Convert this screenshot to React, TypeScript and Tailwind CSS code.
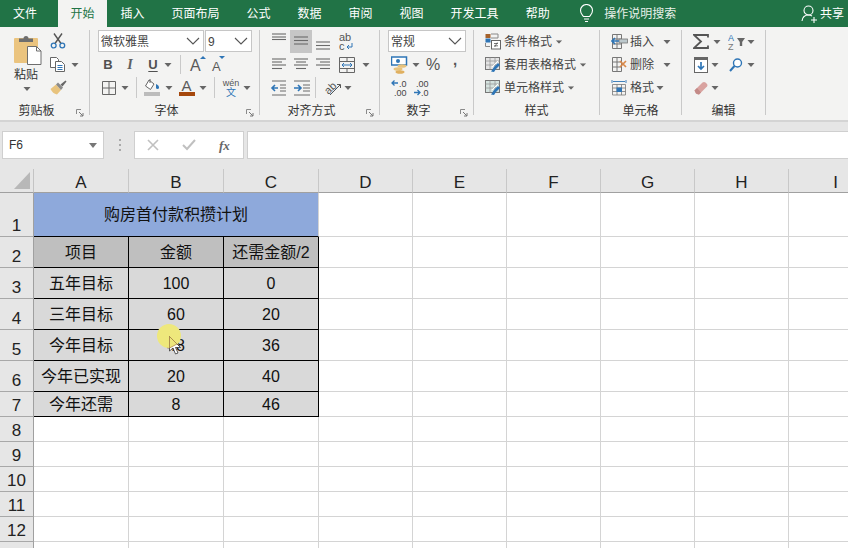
import React from "react";

const G = "#6a6a6a";
const B = "#2e75b6";

function Chev({ className = "" }: { className?: string }) {
  return (
    <svg width="8" height="4" viewBox="0 0 8 4" className={`shrink-0 ${className}`}>
      <path d="M0.5 0H7.5L4 4Z" fill="#666" />
    </svg>
  );
}
function BigChev() {
  return (
    <svg width="14" height="8" viewBox="0 0 14 8" className="shrink-0">
      <path d="M1 1L7 7L13 1" fill="none" stroke="#555" strokeWidth="1.1" />
    </svg>
  );
}
function Launcher() {
  return (
    <svg width="8" height="8" viewBox="0 0 8 8" className="shrink-0">
      <path d="M0.5 5V0.5H5" fill="none" stroke="#8a8a8a" />
      <path d="M3 3L7 7M7 4V7H4" fill="none" stroke="#777" />
    </svg>
  );
}
function Sep({ className = "h-[85px]" }: { className?: string }) {
  return <div className={`w-px shrink-0 bg-[#c9c9c9] ${className}`} />;
}
function Row({ children, className = "" }: { children?: React.ReactNode; className?: string }) {
  return <div className={`flex h-[23px] items-center ${className}`}>{children}</div>;
}
function Label({ text, launcher }: { text: string; launcher?: boolean }) {
  return (
    <div className="mt-[3px] flex h-[17px] items-center text-[12px] leading-none text-[#333]">
      <div className="flex-1 text-center">{text}</div>
      {launcher && (
        <div className="flex w-[16px] justify-start pt-[5px] pl-[3px]">
          <Launcher />
        </div>
      )}
    </div>
  );
}
function Lines({ ys, xs }: { ys: number[]; xs: [number, number][] }) {
  return (
    <svg width="22" height="23" viewBox="0 0 22 23" className="shrink-0">
      {ys.map((y, i) => (
        <line key={i} x1={xs[i][0]} x2={xs[i][1]} y1={y} y2={y} stroke={G} strokeWidth="1.1" />
      ))}
    </svg>
  );
}
function MiniGrid({ fill, children }: { fill?: string; children?: React.ReactNode }) {
  return (
    <svg width="17" height="17" viewBox="0 0 17 17" className="shrink-0">
      <path d="M1.5 1.5H10.5V15.5H1.5ZM6 1.5V15.5M1.5 6H10.5M1.5 11H10.5" fill="none" stroke="#777" strokeWidth="1" />
      {fill && <rect x="2" y="6" width="8" height="5" fill={fill} />}
      {children}
    </svg>
  );
}
function StyleIcon({ tint }: { tint: string }) {
  return (
    <svg width="16" height="17" viewBox="0 0 16 17" className="shrink-0">
      <rect x="0.5" y="1.5" width="14" height="12" fill={tint} stroke="#777" />
      <path d="M0.5 5H14.5M0.5 9H14.5M5 1.5V13.5M10 1.5V13.5" stroke="#999" strokeWidth="0.8" />
      <path d="M6 15.5L9 11L13 7L15 9L11 13L9 16Z" fill={B} />
      <path d="M7 11L13 5" stroke="#fff" strokeWidth="1" />
    </svg>
  );
}
function StyleRow({ icon, text }: { icon: React.ReactNode; text: string }) {
  return (
    <Row className="pl-[11px]">
      {icon}
      <span className="ml-[3px] text-[12px] text-[#444]">{text}</span>
      <Chev className="ml-[3px] scale-90" />
    </Row>
  );
}
function CellRow({ icon, text, chevGap }: { icon: React.ReactNode; text: string; chevGap: string }) {
  return (
    <Row className="pl-[11px]">
      {icon}
      <span className="ml-[2px] text-[12px] text-[#444]">{text}</span>
      <Chev className={chevGap} />
    </Row>
  );
}

const tabs = ["插入", "页面布局", "公式", "数据", "审阅", "视图", "开发工具", "帮助"];

function TabBar() {
  return (
    <div className="flex h-[27px] items-center bg-[#217346] text-[12px] text-white">
      <div className="px-[13px]">文件</div>
      <div className="ml-[8px] flex h-full w-[49px] shrink-0 items-center justify-center bg-[#f3f3f2] text-[#217346]">开始</div>
      {tabs.map((t) => (
        <div key={t} className="shrink-0 px-[13.5px]">{t}</div>
      ))}
      <svg width="15" height="19" viewBox="0 0 15 19" className="ml-[16px] shrink-0">
        <path d="M4.5 12.5C3 10.5 1.5 9.5 1.5 6.5A6 6 0 0 1 13.5 6.5C13.5 9.5 12 10.5 10.5 12.5ZM5 15H10M6 17.5H9" fill="none" stroke="#fff" strokeWidth="1.1" />
      </svg>
      <div className="ml-[10px] text-[#e8f0ea]">操作说明搜索</div>
      <div className="ml-auto flex items-center pr-[4px]">
        <svg width="17" height="18" viewBox="0 0 17 18" className="shrink-0">
          <circle cx="7.5" cy="5.5" r="4.5" fill="none" stroke="#fff" strokeWidth="1.1" />
          <path d="M1 16C1.5 12 4 10 7.5 10C9 10 10 10.4 11 11M10 15H16M13 12V18" fill="none" stroke="#fff" strokeWidth="1.1" />
        </svg>
        <span className="ml-[2px]">共享</span>
      </div>
    </div>
  );
}

function Clipboard() {
  return (
    <div className="w-[89px] shrink-0">
      <div className="flex h-[69px]">
        <div className="ml-[13px] flex w-[29px] flex-col items-start">
          <svg width="29" height="31" viewBox="0 0 29 31" className="mt-[4px] shrink-0">
            <rect x="1" y="4" width="24" height="25" rx="1" fill="#ebc47f" />
            <path d="M6 8V4.5H10.5A2.5 2.5 0 0 1 15.5 4.5H20V8Z" fill="#6e6e6e" />
            <path d="M14.5 12.5H23.5L28 17V30.5H14.5Z" fill="#fff" stroke="#6e6e6e" />
            <path d="M23.5 12.5V17H28" fill="none" stroke="#6e6e6e" />
          </svg>
          <div className="mt-[3px] pl-px text-[12px] leading-[14px] text-[#333]">粘贴</div>
          <Chev className="mt-[5px] ml-[10px]" />
        </div>
        <div className="ml-[8px] flex flex-col">
          <svg width="16" height="16" viewBox="0 0 16 16" className="mt-[3px] shrink-0">
            <path d="M4 0.5L11 10.5M12 0.5L5 10.5" stroke="#555" strokeWidth="1.4" fill="none" />
            <circle cx="3.7" cy="12.5" r="2.4" fill="none" stroke={B} strokeWidth="1.3" />
            <circle cx="12.3" cy="12.5" r="2.4" fill="none" stroke={B} strokeWidth="1.3" />
          </svg>
          <div className="mt-[8px] flex items-center">
            <svg width="16" height="15" viewBox="0 0 16 15" className="shrink-0">
              <path d="M0.5 0.5H6.5L8.5 2.5V10.5H0.5Z" fill="#fff" stroke="#666" />
              <path d="M5.5 4.5H11.5L14.5 7.5V14.5H5.5Z" fill="#fff" stroke="#666" />
              <path d="M7.5 8.5H12.5M7.5 10.5H12.5M7.5 12.5H12.5" stroke={B} />
            </svg>
            <Chev className="ml-[5px]" />
          </div>
          <svg width="17" height="15" viewBox="0 0 17 15" className="mt-[8px] shrink-0">
            <path d="M0.5 9L6 4.5L11 10L7 14.5C4 14 2 12 0.5 9Z" fill="#e8c37d" />
            <path d="M6 4.5L8 2.5L13 7.5L11 10Z" fill="#8a8a8a" />
            <path d="M10.5 4.5L15.5 0.5L16.5 1.5L12.5 6.5Z" fill="#666" />
          </svg>
        </div>
      </div>
      <Label text="剪贴板" launcher />
    </div>
  );
}

function Box({ className, text }: { className: string; text: string }) {
  return (
    <div className={`flex h-[22px] items-center justify-between border border-[#c6c6c6] bg-white pl-[2px] pr-[3px] text-[12px] text-[#444] ${className}`}>
      <span className="pt-px">{text}</span>
      <BigChev />
    </div>
  );
}

function Font() {
  return (
    <div className="w-[169px] shrink-0">
      <div className="flex h-[23px] pl-[8px]">
        <Box className="w-[106px]" text="微软雅黑" />
        <Box className="ml-px w-[47px]" text="9" />
      </div>
      <Row>
        <div className="ml-[8px] w-[20px] text-center font-bold text-[13px] leading-none text-[#505050]">B</div>
        <div className="w-[24px] text-center font-['Liberation_Serif',serif] font-bold italic text-[14px] leading-none text-[#606060]">I</div>
        <div className="w-[22px] text-center font-bold text-[13px] leading-none text-[#505050] underline underline-offset-2">U</div>
        <div className="w-[8px]"><Chev /></div>
        <Sep className="ml-[8px] h-[19px]" />
        <svg width="30" height="23" viewBox="0 0 30 23" className="shrink-0">
          <text x="9" y="18" fontSize="16" fill="#5a5a5a" fontFamily="Liberation Sans">A</text>
          <path d="M19 6L22 3L25 6Z" fill={B} />
        </svg>
        <svg width="16" height="23" viewBox="0 0 16 23" className="shrink-0">
          <text x="1" y="18" fontSize="13" fill="#5a5a5a" fontFamily="Liberation Sans">A</text>
          <path d="M8 3H14L11 6Z" fill={B} />
        </svg>
      </Row>
      <Row>
        <svg width="14" height="14" viewBox="0 0 14 14" className="ml-[12px] shrink-0">
          <path d="M0.5 0.5H13.5V13.5H0.5ZM7 0.5V13.5M0.5 7H13.5" fill="none" stroke="#666" />
        </svg>
        <Chev className="ml-[5px]" />
        <Sep className="ml-[7px] h-[21px]" />
        <svg width="17" height="19" viewBox="0 0 17 19" className="ml-[7px] shrink-0">
          <path d="M5 2L10 6L6.5 11.5L1.5 8Z" fill="#fff" stroke="#666" />
          <path d="M6 1V5" stroke="#666" />
          <path d="M12 6C14 7 15 8 15 9.5A1.5 1.5 0 0 1 12 9.5Z" fill={B} />
          <rect x="0" y="14" width="16" height="4" fill="#bcbcbc" />
        </svg>
        <Chev className="ml-[4px]" />
        <svg width="16" height="19" viewBox="0 0 16 19" className="ml-[6px] shrink-0">
          <text x="2.5" y="13" fontSize="15" fill="#5a5a5a" fontFamily="Liberation Sans">A</text>
          <rect x="0" y="14" width="16" height="4" fill="#a5470c" />
        </svg>
        <Chev className="ml-[4px]" />
        <Sep className="ml-[7px] h-[21px]" />
        <div className="ml-[7px] flex w-[18px] shrink-0 flex-col items-center">
          <span className="text-[9px] leading-[10px] text-[#555]">wén</span>
          <span className="text-[10px] leading-[10px] text-[#2e75b6]">文</span>
        </div>
        <Chev className="ml-[3px]" />
      </Row>
      <Label text="字体" launcher />
    </div>
  );
}

function Align() {
  const a = [[4, 18], [4, 18], [4, 18]] as [number, number][];
  const left = [[4, 18], [4, 14], [4, 18], [4, 14]] as [number, number][];
  const mid = [[4, 18], [6, 16], [4, 18], [6, 16]] as [number, number][];
  const right = [[4, 18], [8, 18], [4, 18], [8, 18]] as [number, number][];
  const ys = [6, 9, 12, 15.5];
  return (
    <div className="w-[119px] shrink-0">
      <Row className="pl-[8px]">
        <Lines ys={[4, 7, 9.5]} xs={a} />
        <div className="bg-[#c6c6c6]"><Lines ys={[7, 10.5, 14]} xs={a} /></div>
        <Lines ys={[12, 15.5, 19]} xs={a} />
        <div className="ml-[5px] flex flex-col text-[11px] leading-[9px] text-[#555]">
          <span className="block h-[9px]">ab</span>
          <span className="flex h-[9px] items-center">
            c
            <svg width="7" height="7" viewBox="0 0 7 7" className="ml-[1px] shrink-0">
              <path d="M6 0V4H1M3 2L1 4L3 6" fill="none" stroke={B} />
            </svg>
          </span>
        </div>
      </Row>
      <Row className="pl-[8px]">
        <Lines ys={ys} xs={left} />
        <Lines ys={ys} xs={mid} />
        <Lines ys={ys} xs={right} />
        <svg width="16" height="16" viewBox="0 0 16 16" className="ml-[5px] shrink-0">
          <path d="M0.5 0.5H15.5V15.5H0.5ZM0.5 4.5H15.5M0.5 11.5H15.5M8 0.5V4.5M8 11.5V15.5" fill="none" stroke="#666" />
          <path d="M3 8H13M5 6L3 8L5 10M11 6L13 8L11 10" fill="none" stroke={B} />
        </svg>
        <Chev className="ml-[7px]" />
      </Row>
      <Row className="pl-[8px]">
        <svg width="22" height="18" viewBox="0 0 22 18" className="shrink-0">
          <path d="M4 2H18M12 6H18M12 9H18M12 12H18M4 16H18" stroke={G} />
          <path d="M10 9H4M7 6L4 9L7 12" fill="none" stroke={B} strokeWidth="1.6" />
        </svg>
        <svg width="22" height="18" viewBox="0 0 22 18" className="shrink-0">
          <path d="M4 2H20M13 6H20M13 9H20M13 12H20M4 16H20" stroke={G} />
          <path d="M4 9H11M8 6L11 9L8 12" fill="none" stroke={B} strokeWidth="1.6" />
        </svg>
        <Sep className="ml-[3px] h-[21px]" />
        <svg width="19" height="19" viewBox="0 0 19 19" className="ml-[7px] shrink-0">
          <text x="1" y="14" fontSize="11" fill="#555" fontFamily="Liberation Sans" transform="rotate(-45 7 10)">ab</text>
          <path d="M7 17L17 7M14 6.5H17.5V10" fill="none" stroke="#555" />
        </svg>
        <Chev className="ml-[2px]" />
      </Row>
      <Label text="对齐方式" launcher />
    </div>
  );
}

function NumberGroup() {
  return (
    <div className="w-[93px] shrink-0">
      <div className="flex h-[23px] pl-[8px]">
        <Box className="w-[78px]" text="常规" />
      </div>
      <Row className="pl-[11px]">
        <svg width="17" height="18" viewBox="0 0 17 18" className="shrink-0">
          <rect x="0.5" y="1" width="15" height="8" fill="#fff" stroke={B} strokeWidth="1.5" />
          <circle cx="7" cy="5" r="2" fill={B} />
          <ellipse cx="11" cy="10" rx="4.5" ry="1.8" fill="#e8c37d" />
          <ellipse cx="7" cy="13" rx="4.5" ry="1.8" fill="#e8c37d" />
          <ellipse cx="9" cy="16" rx="4.5" ry="1.8" fill="#e0b060" />
        </svg>
        <Chev className="ml-[4px]" />
        <span className="ml-[3px] w-[20px] text-center text-[16px] leading-none text-[#555]">%</span>
        <span className="ml-[2px] w-[20px] -translate-y-[5px] text-center font-bold text-[15px] leading-none text-[#555]">,</span>
      </Row>
      <Row className="pl-[11px]">
        <svg width="16" height="18" viewBox="0 0 16 18" className="shrink-0">
          <path d="M7 4H1M3.5 1.5L1 4L3.5 6.5" fill="none" stroke={B} strokeWidth="1.3" />
          <text x="8" y="8" fontSize="9" fill="#444" fontFamily="Liberation Sans">.0</text>
          <text x="3" y="17" fontSize="9" fill="#444" fontFamily="Liberation Sans">.00</text>
        </svg>
        <svg width="16" height="18" viewBox="0 0 16 18" className="ml-[6px] shrink-0">
          <text x="3" y="8" fontSize="9" fill="#444" fontFamily="Liberation Sans">.00</text>
          <path d="M1 13.5H7M4.5 11L7 13.5L4.5 16" fill="none" stroke={B} strokeWidth="1.3" />
          <text x="8" y="17" fontSize="9" fill="#444" fontFamily="Liberation Sans">.0</text>
        </svg>
      </Row>
      <Label text="数字" launcher />
    </div>
  );
}

function Styles() {
  return (
    <div className="w-[125px] shrink-0">
      <StyleRow
        text="条件格式"
        icon={
          <svg width="16" height="17" viewBox="0 0 16 17" className="shrink-0">
            <rect x="0.5" y="1" width="5" height="4" fill="#a5622c" />
            <rect x="0.5" y="5.5" width="5" height="4" fill={B} />
            <path d="M6 1H13V5M6 5H13M0.5 10V13.5H5" fill="none" stroke="#888" />
            <rect x="6.5" y="7.5" width="9" height="8.5" fill="#fff" stroke="#666" />
            <path d="M9 10.5H13M9 12.8H13M12.3 9.5L9.7 14" stroke="#555" strokeWidth="0.8" />
          </svg>
        }
      />
      <StyleRow text="套用表格格式" icon={<StyleIcon tint="#e3e3e3" />} />
      <StyleRow text="单元格样式" icon={<StyleIcon tint="#d5e3df" />} />
      <Label text="样式" />
    </div>
  );
}

function Cells() {
  return (
    <div className="w-[81px] shrink-0">
      <CellRow
        text="插入"
        chevGap="ml-[9px]"
        icon={
          <MiniGrid>
            <rect x="8" y="6" width="8.5" height="4" fill="#bcc8cc" stroke="#777" strokeWidth="0.8" />
            <path d="M8 8H1M4 5L1 8L4 11" fill="none" stroke={B} strokeWidth="1.6" />
          </MiniGrid>
        }
      />
      <CellRow
        text="删除"
        chevGap="ml-[9px]"
        icon={
          <MiniGrid>
            <path d="M9 5L15 11M15 5L9 11" stroke="#d9894a" strokeWidth="1.7" />
          </MiniGrid>
        }
      />
      <CellRow
        text="格式"
        chevGap="ml-[2px]"
        icon={
          <svg width="17" height="17" viewBox="0 0 17 17" className="shrink-0">
            <path d="M1 1V4M15 1V4M2 2.5H14" stroke={B} strokeWidth="0.9" />
            <path d="M1.5 5.5H14.5V16H1.5ZM6 5.5V16M10.5 5.5V16M1.5 9H14.5M1.5 12.5H14.5" fill="none" stroke="#777" strokeWidth="0.8" />
            <rect x="5.5" y="8.5" width="5.5" height="4.5" fill={B} />
          </svg>
        }
      />
      <Label text="单元格" />
    </div>
  );
}

function Editing() {
  return (
    <div className="w-[83px] shrink-0">
      <Row className="pl-[11px]">
        <svg width="16" height="15" viewBox="0 0 16 15" className="shrink-0">
          <path d="M15 3.5V1H1L8 7.5L1 14H15V11.5" fill="none" stroke="#555" strokeWidth="1.8" />
        </svg>
        <Chev className="ml-[4px]" />
        <svg width="18" height="18" viewBox="0 0 18 18" className="ml-[7px] shrink-0">
          <text x="0" y="8" fontSize="9" fill={B} fontFamily="Liberation Sans">A</text>
          <text x="0" y="17" fontSize="9" fill="#777" fontFamily="Liberation Sans">Z</text>
          <path d="M9 5H17L14.2 9V13H11.8V9Z" fill="#666" />
        </svg>
        <Chev className="ml-[1px]" />
      </Row>
      <Row className="pl-[12px]">
        <svg width="14" height="16" viewBox="0 0 14 16" className="shrink-0">
          <rect x="0.5" y="0.5" width="13" height="15" fill="#fff" stroke="#666" />
          <rect x="0.5" y="0.5" width="13" height="2.5" fill="#666" />
          <path d="M7 5V12M4 9L7 12L10 9" fill="none" stroke={B} strokeWidth="1.7" />
        </svg>
        <Chev className="ml-[3px]" />
        <svg width="14" height="14" viewBox="0 0 14 14" className="ml-[10px] shrink-0">
          <circle cx="8.5" cy="5" r="4" fill="#fff" stroke={B} strokeWidth="1.4" />
          <path d="M5.5 8L1 13" stroke={B} strokeWidth="2" />
        </svg>
        <Chev className="ml-[4px]" />
      </Row>
      <Row className="pl-[12px]">
        <svg width="14" height="14" viewBox="0 0 14 14" className="shrink-0">
          <path d="M0.5 9.5L8.5 1.5C9.5 0.7 10.5 0.7 11.5 1.5L13 3C13.7 4 13.5 5 13 5.5L5 13.5C4 13.5 3 13.3 2 12.5Z" fill="#d9a3a0" />
          <path d="M0.5 9.5L2 12.5L5 13.5L7 11.5L3 7Z" fill="#c38a87" />
        </svg>
        <Chev className="ml-[3px]" />
      </Row>
      <Label text="编辑" />
    </div>
  );
}

function Ribbon() {
  return (
    <div className="flex h-[95px] items-start border-b-2 border-[#d4d4d4] bg-[#f3f3f2] pt-[3px]">
      <Clipboard />
      <Sep />
      <Font />
      <Sep />
      <Align />
      <Sep />
      <NumberGroup />
      <Sep />
      <Styles />
      <Sep />
      <Cells />
      <Sep />
      <Editing />
      <Sep />
    </div>
  );
}

function FormulaBar() {
  return (
    <div className="flex h-[47px] items-start bg-[#e6e6e6] pt-[9px]">
      <div className="ml-[2px] flex h-[28px] w-[102px] shrink-0 items-center justify-between border border-[#cfcfcf] bg-white pl-[6px] pr-[6px] text-[12px] text-[#333]">
        <span>F6</span>
        <svg width="8" height="5" viewBox="0 0 8 5"><path d="M0 0H8L4 5Z" fill="#777" /></svg>
      </div>
      <div className="ml-[14px] flex h-[28px] w-[3px] shrink-0 flex-col items-center justify-center gap-[3px]">
        <div className="h-[2px] w-[2px] bg-[#aaa]" />
        <div className="h-[2px] w-[2px] bg-[#aaa]" />
        <div className="h-[2px] w-[2px] bg-[#aaa]" />
      </div>
      <div className="ml-[13px] flex h-[28px] w-[110px] shrink-0 items-center border border-[#cfcfcf] bg-white">
        <svg width="12" height="12" viewBox="0 0 12 12" className="ml-[12px]">
          <path d="M1 1L11 11M11 1L1 11" stroke="#c0c0c0" strokeWidth="1.6" />
        </svg>
        <svg width="14" height="12" viewBox="0 0 14 12" className="ml-[23px]">
          <path d="M1 6L5 10L13 1" fill="none" stroke="#c0c0c0" strokeWidth="2" />
        </svg>
        <span className="ml-[23px] font-['Liberation_Serif',serif] text-[13px] font-bold italic leading-none text-[#666]">fx</span>
      </div>
      <div className="ml-[3px] h-[28px] w-[620px] shrink-0 border border-[#cfcfcf] bg-white" />
    </div>
  );
}

const colHead = ["A", "B", "C", "D", "E", "F", "G", "H", "I"];
const table: string[][] = [
  ["项目", "金额", "还需金额/2"],
  ["五年目标", "100", "0"],
  ["三年目标", "60", "20"],
  ["今年目标", "48", "36"],
  ["今年已实现", "20", "40"],
  ["今年还需", "8", "46"],
];
const blanks = [0, 1, 2, 3, 4, 5];
const emptyRows = [8, 9, 10, 11, 12];

function RowHead({ n }: { n?: number }) {
  return (
    <div className="flex items-end justify-center border-r border-b border-r-[#a0a0a0] border-b-[#a8a8a8] bg-[#e6e6e6] pb-[2px] text-[17px] leading-none text-[#222]">
      {n}
    </div>
  );
}
function Blank() {
  return <div className="border-r border-b border-[#d4d4d4] bg-white" />;
}

function Sheet() {
  return (
    <div className="grid grid-cols-[34px_95px_95px_95px_94px_94px_94px_94px_94px_94px] grid-rows-[24px_44px_31px_31px_31px_31px_31px_25px_25px_25px_25px_25px_25px_25px] text-[16px] leading-none text-[#111]">
      <div className="flex items-end justify-end border-r border-b border-r-[#c4c4c4] border-b-[#a0a0a0] bg-[#e6e6e6] pb-[3px] pr-[3px]">
        <svg width="16" height="17" viewBox="0 0 16 17"><path d="M16 0V17H0Z" fill="#b8b8b8" /></svg>
      </div>
      {colHead.map((c) => (
        <div key={c} className="flex items-end justify-center border-r border-b border-r-[#c8c8c8] border-b-[#a0a0a0] bg-[#e6e6e6] pb-[1px] text-[17px] text-[#222]">
          {c}
        </div>
      ))}

      <RowHead n={1} />
      <div className="col-span-3 flex items-center justify-center border-r border-b border-r-[#d4d4d4] border-b-black bg-[#8ea9db] pt-px">
        购房首付款积攒计划
      </div>
      {blanks.map((b) => <Blank key={b} />)}

      {table.map((r, i) => (
        <div key={i} className="contents">
          <RowHead n={i + 2} />
          {r.map((v, j) => (
            <div key={j} className={`flex items-center justify-center border-r border-b border-black pt-px ${i === 0 ? "bg-[#bfbfbf]" : "bg-[#d9d9d9]"}`}>
              {v}
            </div>
          ))}
          {blanks.map((b) => <Blank key={b} />)}
        </div>
      ))}

      {emptyRows.map((n) => (
        <div key={n} className="contents">
          <RowHead n={n} />
          <Blank /><Blank /><Blank />
          {blanks.map((b) => <Blank key={b} />)}
        </div>
      ))}
      <RowHead />
      <Blank /><Blank /><Blank />
      {blanks.map((b) => <Blank key={b} />)}
    </div>
  );
}

export default function App() {
  return (
    <div className="relative h-[548px] w-[848px] overflow-hidden bg-white font-['Liberation_Sans','Noto_Sans_CJK_SC',sans-serif]">
      <TabBar />
      <Ribbon />
      <FormulaBar />
      <Sheet />
      <div className="absolute top-[324px] left-[157px] h-[24px] w-[24px] rounded-full bg-[#eee87c]" />
      <svg width="13" height="21" viewBox="0 0 13 21" className="absolute top-[336px] left-[169px]">
        <path d="M0.5 0.5V15L4 12L6.5 18L9 17L6.5 11.5H11.5Z" fill="#fff" stroke="#333" strokeWidth="0.8" />
        <path d="M0.5 0.5V12L8 8Z" fill="#eee87c" stroke="#b08a4a" strokeWidth="0.8" />
      </svg>
    </div>
  );
}
